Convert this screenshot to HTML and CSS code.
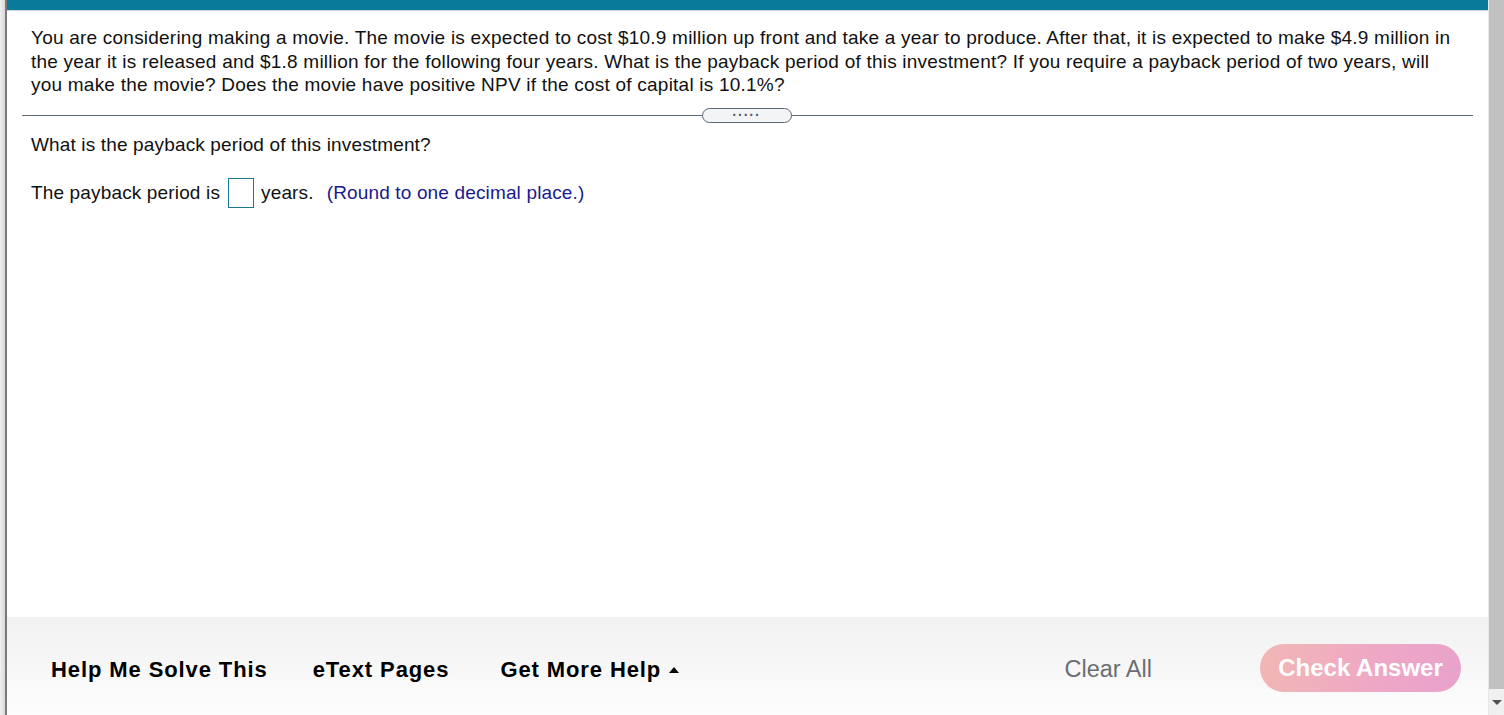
FILE: index.html
```html
<!DOCTYPE html>
<html lang="en">
<head>
<meta charset="utf-8">
<title>Question</title>
<link rel="stylesheet" href="styles.css">
</head>
<body>
<div class="frame">
  <div class="edge"></div>
  <div class="main">
    <div class="topbar"></div>
    <div class="content">
      <p class="question">You are considering making a movie. The movie is expected to cost $10.9 million up front and take a year to produce. After that, it is expected to make $4.9 million in the year it is released and $1.8 million for the following four years. What is the payback period of this investment? If you require a payback period of two years, will you make the movie? Does the movie have positive NPV if the cost of capital is 10.1%?</p>
      <div class="divider">
        <span class="handle"><span class="dots">&middot;&middot;&middot;&middot;&middot;</span></span>
      </div>
      <p class="prompt">What is the payback period of this investment?</p>
      <p class="answer">The payback period is <span class="box"></span> years.<span class="hint">(Round to one decimal place.)</span></p>
    </div>
    <div class="footer">
      <div class="links">
        <span class="link help">Help Me Solve This</span>
        <span class="link etext">eText Pages</span>
        <span class="link more">Get More Help <span class="caret"></span></span>
      </div>
      <div class="actions">
        <span class="clear">Clear All</span>
        <span class="check">Check Answer</span>
      </div>
    </div>
  </div>
  <div class="scrollbar">
    <div class="thumb"></div>
    <div class="arrow"><span class="tri"></span></div>
  </div>
</div>
</body>
</html>
```
FILE: styles.css
```css
html, body {
  margin: 0;
  padding: 0;
  height: 100%;
}
body {
  font-family: "Liberation Sans", Arial, sans-serif;
  color: #111;
  background: #fff;
  overflow: hidden;
}
.frame {
  display: flex;
  height: 715px;
  width: 1504px;
}
.edge {
  width: 5px;
  flex: none;
  background: linear-gradient(to right, #f0f0f0, #d8d8d8);
  border-right: 2px solid #7a7a7a;
}
.main {
  flex: 1;
  display: flex;
  flex-direction: column;
  min-width: 0;
}
.topbar {
  height: 10px;
  background: #097a9a;
  border-bottom: 1px solid #d0d6da;
  flex: none;
}
.content {
  flex: 1;
  padding: 15px 15px 0 15px;
}
.question {
  margin: 0;
  padding: 0 15px 0 9px;
  font-size: 19px;
  letter-spacing: 0.22px;
  line-height: 23.5px;
}
.divider {
  position: relative;
  height: 1px;
  background: #5f6b77;
  margin: 18px 0 0 0;
}
.handle {
  position: absolute;
  left: 50%;
  top: -7px;
  width: 88px;
  height: 13px;
  margin-left: -46px;
  background: #f3f4f6;
  border: 1px solid #5a6877;
  border-radius: 8px;
  display: flex;
  align-items: center;
  justify-content: center;
}
.dots {
  font-size: 14px;
  line-height: 10px;
  letter-spacing: 1px;
  color: #555d66;
  font-weight: bold;
  margin-top: -1px;
}
.prompt {
  margin: 17px 0 0 9px;
  font-size: 19px;
  letter-spacing: 0.15px;
  line-height: 23px;
}
.answer {
  margin: 21px 0 0 9px;
  font-size: 19px;
  letter-spacing: 0.15px;
  line-height: 32px;
  display: flex;
  align-items: center;
}
.box {
  display: inline-block;
  width: 24px;
  height: 28px;
  border: 1px solid #1a7894;
  margin: 0 7px 0 8px;
}
.hint {
  color: #1a1a8e;
  margin-left: 13px;
}
.footer {
  flex: none;
  height: 98px;
  background: linear-gradient(to bottom, #f1f1f1, #fdfdfd);
  display: flex;
  align-items: center;
  justify-content: space-between;
  padding: 0 27px 0 44px;
}
.links {
  display: flex;
  padding-top: 7px;
}
.link {
  font-size: 22px;
  letter-spacing: 0.9px;
  font-weight: bold;
  color: #000;
  display: flex;
  align-items: center;
}
.etext {
  margin-left: 45px;
}
.more {
  margin-left: 51px;
}
.caret {
  display: inline-block;
  width: 0;
  height: 0;
  border-left: 5px solid transparent;
  border-right: 5px solid transparent;
  border-bottom: 6px solid #000;
  margin-left: 8px;
}
.actions {
  display: flex;
  align-items: center;
  gap: 108px;
  padding-top: 4px;
}
.clear {
  font-size: 23.5px;
  color: #6a6e74;
  padding-top: 2px;
}
.check {
  width: 201px;
  height: 48px;
  border-radius: 24px;
  background: linear-gradient(100deg, #f2b7b4, #eea7c6 60%, #e8a2cb);
  color: #fff;
  font-weight: bold;
  font-size: 24px;
  display: flex;
  align-items: center;
  justify-content: center;
  margin-top: 0;
}
.scrollbar {
  flex: none;
  width: 15px;
  border-left: 1px solid #e6e6e6;
  background: #f0f0f0;
  display: flex;
  flex-direction: column;
}
.thumb {
  height: 689px;
  background: #c1c1c1;
}
.arrow {
  flex: 1;
  display: flex;
  align-items: center;
  justify-content: center;
}
.tri {
  width: 0;
  height: 0;
  border-left: 5px solid transparent;
  border-right: 5px solid transparent;
  border-top: 5px solid #505050;
}
```
